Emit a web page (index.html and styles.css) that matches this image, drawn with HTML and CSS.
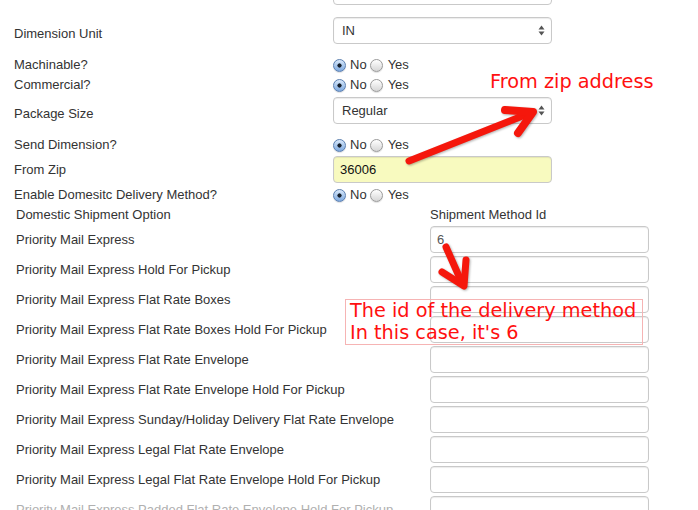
FILE: index.html
```html
<!DOCTYPE html>
<html lang="en">
<head>
  <meta charset="UTF-8">
  <title>Shipping Settings</title>
  <link rel="stylesheet" href="styles.css">
</head>
<body>
<div class="page">
  <form class="settings">
    <div class="field field-input">
      <label class="label-top">Weight (lbs)</label>
      <input class="text-input" type="text">
    </div>
    <div class="field field-input mt-12">
      <label class="label-low">Dimension Unit</label>
      <div class="select">
        <span>IN</span>
        <svg class="updown" width="7" height="11" viewBox="0 0 7 11"><polygon points="0.5,4.5 3.5,0.5 6.5,4.5"/><polygon points="0.5,6.5 3.5,10.5 6.5,6.5"/></svg>
      </div>
    </div>
    <div class="field field-radio mt-10">
      <label>Machinable?</label>
      <div class="radios">
        <input type="radio" name="machinable" checked><span class="opt-no">No</span>
        <input type="radio" name="machinable"><span class="opt-yes">Yes</span>
      </div>
    </div>
    <div class="field field-radio">
      <label>Commercial?</label>
      <div class="radios">
        <input type="radio" name="commercial" checked><span class="opt-no">No</span>
        <input type="radio" name="commercial"><span class="opt-yes">Yes</span>
      </div>
    </div>
    <div class="field field-input mt-3">
      <label class="label-low">Package Size</label>
      <div class="select">
        <span>Regular</span>
        <svg class="updown" width="7" height="11" viewBox="0 0 7 11"><polygon points="0.5,4.5 3.5,0.5 6.5,4.5"/><polygon points="0.5,6.5 3.5,10.5 6.5,6.5"/></svg>
      </div>
    </div>
    <div class="field field-radio mt-10">
      <label>Send Dimension?</label>
      <div class="radios">
        <input type="radio" name="senddim" checked><span class="opt-no">No</span>
        <input type="radio" name="senddim"><span class="opt-yes">Yes</span>
      </div>
    </div>
    <div class="field field-input mt-2">
      <label>From Zip</label>
      <input class="text-input autofill" type="text" value="36006">
    </div>
    <div class="field field-radio mt-1">
      <label>Enable Domesitc Delivery Method?</label>
      <div class="radios">
        <input type="radio" name="domestic" checked><span class="opt-no">No</span>
        <input type="radio" name="domestic"><span class="opt-yes">Yes</span>
      </div>
    </div>
  </form>

  <div class="ship-head">
    <span>Domestic Shipment Option</span>
    <span>Shipment Method Id</span>
  </div>
  <div class="ship-table">
    <span>Priority Mail Express</span><input class="text-input id-input" type="text" value="6">
    <span>Priority Mail Express Hold For Pickup</span><input class="text-input id-input" type="text">
    <span>Priority Mail Express Flat Rate Boxes</span><input class="text-input id-input" type="text">
    <span>Priority Mail Express Flat Rate Boxes Hold For Pickup</span><input class="text-input id-input" type="text">
    <span>Priority Mail Express Flat Rate Envelope</span><input class="text-input id-input" type="text">
    <span>Priority Mail Express Flat Rate Envelope Hold For Pickup</span><input class="text-input id-input" type="text">
    <span>Priority Mail Express Sunday/Holiday Delivery Flat Rate Envelope</span><input class="text-input id-input" type="text">
    <span>Priority Mail Express Legal Flat Rate Envelope</span><input class="text-input id-input" type="text">
    <span>Priority Mail Express Legal Flat Rate Envelope Hold For Pickup</span><input class="text-input id-input" type="text">
    <span class="faded">Priority Mail Express Padded Flat Rate Envelope Hold For Pickup</span><input class="text-input id-input" type="text">
  </div>

  <!-- annotations drawn over the screenshot -->
  <div class="note note-zip">From zip address</div>
  <div class="note note-id">The id of the delivery method<br>In this case, it's 6</div>
  <svg class="arrows" width="698" height="510" viewBox="0 0 698 510">
    <g fill="none" stroke="#f5170c" stroke-linecap="round" stroke-linejoin="round">
      <line x1="409" y1="161" x2="530" y2="113" stroke-width="7"/>
      <polyline points="505,110 533,112 518,133" stroke-width="8"/>
      <line x1="446" y1="247" x2="462" y2="283" stroke-width="7"/>
      <polyline points="442,272 464,286 466,260" stroke-width="7"/>
    </g>
  </svg>
</div>
</body>
</html>
```

FILE: styles.css
```css
html, body {
  margin: 0;
  overflow: hidden;
}

body {
  font-family: "Liberation Sans", Arial, sans-serif;
  font-size: 13px;
  color: #333;
  background-color: #fff;
}

.page {
  position: relative;
  width: 698px;
  height: 510px;
  overflow: hidden;
}

.settings {
  padding-left: 14px;
  margin-top: -22px;
}

.field {
  display: grid;
  grid-template-columns: 319px 219px;
  align-items: center;
}

.field label {
  line-height: 15px;
}

.field-input {
  height: 27px;
}

.field-radio {
  height: 20px;
}

.label-low {
  padding-top: 6px;
}

.label-top {
  padding-top: 2px;
}

.mt-1 { margin-top: 1px; }
.mt-2 { margin-top: 2px; }
.mt-3 { margin-top: 3px; }
.mt-10 { margin-top: 10px; }
.mt-12 { margin-top: 12px; }

.text-input,
.select {
  box-sizing: border-box;
  width: 219px;
  height: 27px;
  margin: 0;
  border: 1px solid #c9c9c9;
  border-radius: 4px;
  box-shadow: inset 0 1px 1px rgba(0, 0, 0, 0.08);
  background-color: #fff;
  font: inherit;
  color: #333;
  padding: 0 6px;
  outline: none;
}

.select {
  display: flex;
  align-items: center;
  justify-content: space-between;
  padding: 0 6px 0 8px;
}

.updown {
  fill: #555;
}

.autofill {
  background-color: #f8fabf;
  color: #111;
}

.radios {
  display: flex;
  align-items: center;
}

.radios input {
  appearance: none;
  -webkit-appearance: none;
  box-sizing: border-box;
  width: 13px;
  height: 13px;
  margin: 3px 0 0 0;
  border-radius: 50%;
  border: 1px solid #9a9a9a;
  background: linear-gradient(#ffffff, #d6d6d6);
  box-shadow: 0 1px 1px rgba(0, 0, 0, 0.12);
}

.radios input:checked {
  border-color: #5b7fb0;
  background:
    radial-gradient(circle, #16202c 0 1.8px, transparent 2.4px),
    linear-gradient(#d9e9fb, #7ea9df);
}

.opt-no {
  margin: 0 3px 0 4px;
}

.opt-yes {
  margin-left: 5px;
}

.ship-head {
  display: grid;
  grid-template-columns: 414px 219px;
  align-items: center;
  height: 20px;
  margin-left: 16px;
}

.ship-table {
  display: grid;
  grid-template-columns: 414px 219px;
  grid-auto-rows: 27px;
  row-gap: 3px;
  align-items: center;
  margin: 2px 0 0 16px;
}

.id-input {
  color: #555;
}

.faded {
  color: #b0b0b0;
}

.note {
  position: absolute;
  color: #ff1010;
  font-family: "DejaVu Sans", sans-serif;
  font-size: 19.3px;
  line-height: 22px;
  white-space: nowrap;
}

.note-zip {
  left: 490px;
  top: 71px;
}

.note-id {
  left: 345px;
  top: 299px;
  width: 298px;
  box-sizing: border-box;
  padding-left: 4px;
  border: 1px solid #f6b4b4;
}

.arrows {
  position: absolute;
  left: 0;
  top: 0;
  pointer-events: none;
  filter: drop-shadow(1px 1px 1px rgba(0, 0, 0, 0.3));
}
```
